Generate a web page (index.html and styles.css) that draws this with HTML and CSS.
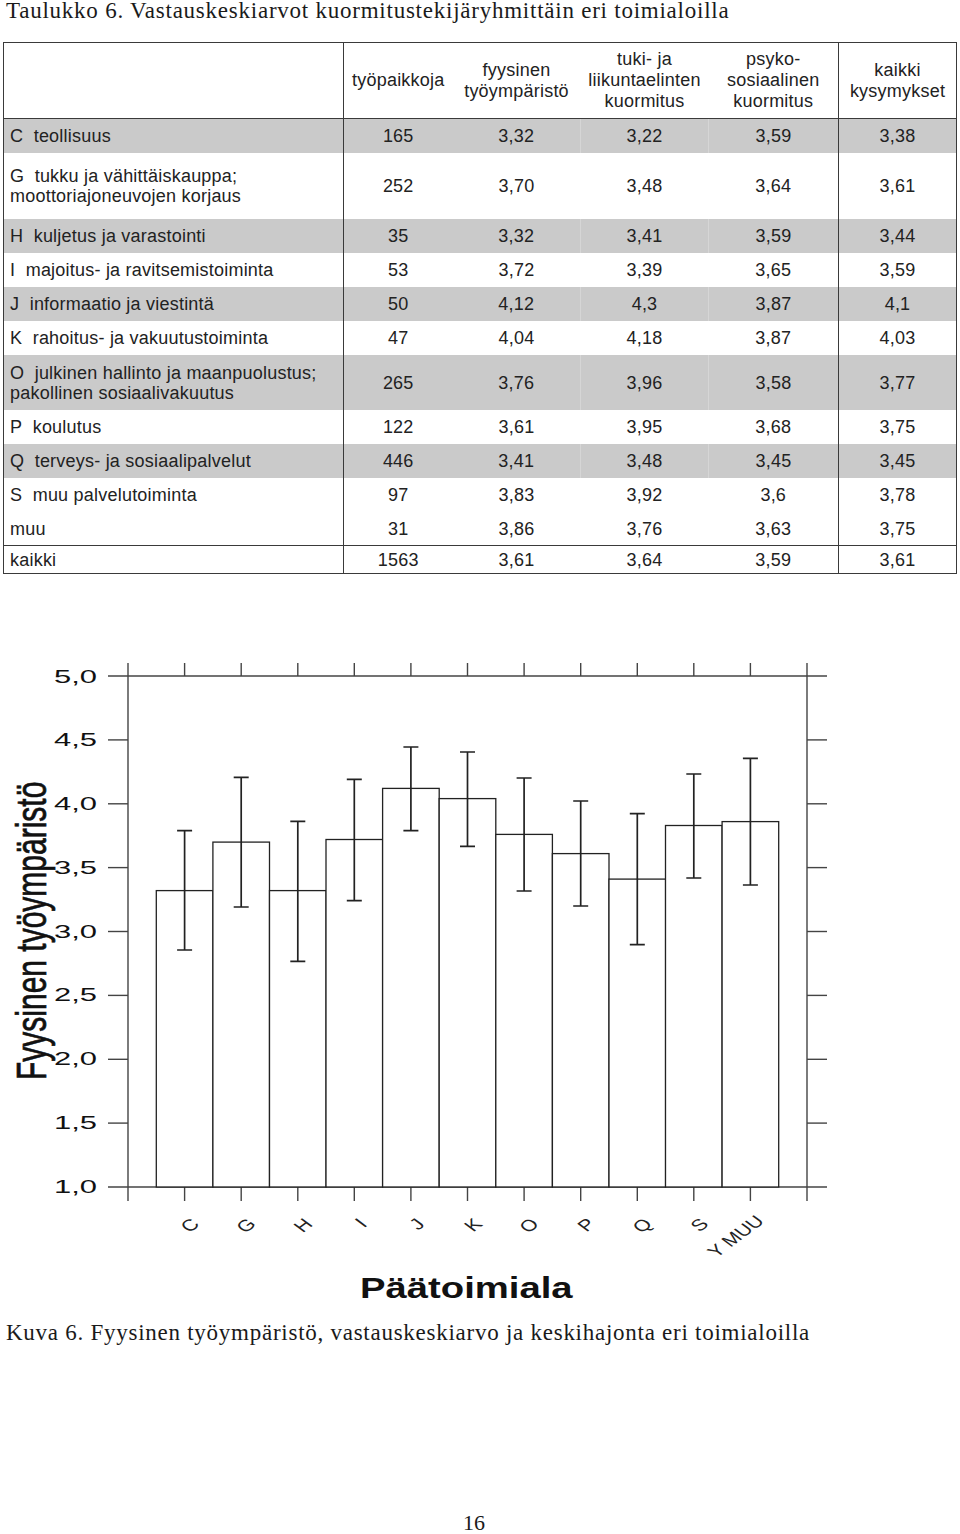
FILE: index.html
```html
<!DOCTYPE html>
<html lang="fi">
<head>
<meta charset="utf-8">
<title>Taulukko 6</title>
<link rel="stylesheet" href="styles.css">
</head>
<body>
<h1 class="title">Taulukko 6. Vastauskeskiarvot kuormitustekijäryhmittäin eri toimialoilla</h1>

<table class="data">
  <colgroup>
    <col class="c-label"><col class="c-n"><col class="c-v"><col class="c-v"><col class="c-v3"><col class="c-all">
  </colgroup>
  <thead>
    <tr class="head">
      <th></th>
      <th class="sep">työpaikkoja</th>
      <th>fyysinen<br>työympäristö</th>
      <th>tuki- ja<br>liikuntaelinten<br>kuormitus</th>
      <th>psyko-<br>sosiaalinen<br>kuormitus</th>
      <th class="sep">kaikki<br>kysymykset</th>
    </tr>
  </thead>
  <tbody>
    <tr class="gray"><td class="lbl">C&nbsp; teollisuus</td><td class="sep">165</td><td>3,32</td><td class="soft">3,22</td><td class="soft">3,59</td><td class="sep">3,38</td></tr>
    <tr class="tall"><td class="lbl">G&nbsp; tukku ja vähittäiskauppa;<br>moottoriajoneuvojen korjaus</td><td class="sep">252</td><td>3,70</td><td class="soft">3,48</td><td class="soft">3,64</td><td class="sep">3,61</td></tr>
    <tr class="gray"><td class="lbl">H&nbsp; kuljetus ja varastointi</td><td class="sep">35</td><td>3,32</td><td class="soft">3,41</td><td class="soft">3,59</td><td class="sep">3,44</td></tr>
    <tr><td class="lbl">I&nbsp; majoitus- ja ravitsemistoiminta</td><td class="sep">53</td><td>3,72</td><td class="soft">3,39</td><td class="soft">3,65</td><td class="sep">3,59</td></tr>
    <tr class="gray"><td class="lbl">J&nbsp; informaatio ja viestintä</td><td class="sep">50</td><td>4,12</td><td class="soft">4,3</td><td class="soft">3,87</td><td class="sep">4,1</td></tr>
    <tr><td class="lbl">K&nbsp; rahoitus- ja vakuutustoiminta</td><td class="sep">47</td><td>4,04</td><td class="soft">4,18</td><td class="soft">3,87</td><td class="sep">4,03</td></tr>
    <tr class="gray mid"><td class="lbl">O&nbsp; julkinen hallinto ja maanpuolustus;<br>pakollinen sosiaalivakuutus</td><td class="sep">265</td><td>3,76</td><td class="soft">3,96</td><td class="soft">3,58</td><td class="sep">3,77</td></tr>
    <tr><td class="lbl">P&nbsp; koulutus</td><td class="sep">122</td><td>3,61</td><td class="soft">3,95</td><td class="soft">3,68</td><td class="sep">3,75</td></tr>
    <tr class="gray"><td class="lbl">Q&nbsp; terveys- ja sosiaalipalvelut</td><td class="sep">446</td><td>3,41</td><td class="soft">3,48</td><td class="soft">3,45</td><td class="sep">3,45</td></tr>
    <tr><td class="lbl">S&nbsp; muu palvelutoiminta</td><td class="sep">97</td><td>3,83</td><td class="soft">3,92</td><td class="soft">3,6</td><td class="sep">3,78</td></tr>
    <tr class="short"><td class="lbl">muu</td><td class="sep">31</td><td>3,86</td><td class="soft">3,76</td><td class="soft">3,63</td><td class="sep">3,75</td></tr>
    <tr class="total"><td class="lbl">kaikki</td><td class="sep">1563</td><td>3,61</td><td>3,64</td><td>3,59</td><td class="sep">3,61</td></tr>
  </tbody>
</table>

<svg class="chart" viewBox="0 574 960 746" width="960" height="746" xmlns="http://www.w3.org/2000/svg">
  <g class="axis">
    <line x1="108" y1="676" x2="827" y2="676"/>
    <line x1="108" y1="1187" x2="827" y2="1187"/>
    <line x1="128" y1="663" x2="128" y2="1201"/>
    <line x1="807" y1="663" x2="807" y2="1201"/>
    <line x1="108" y1="1123.1" x2="128" y2="1123.1"/>
    <line x1="108" y1="1059.3" x2="128" y2="1059.3"/>
    <line x1="108" y1="995.4" x2="128" y2="995.4"/>
    <line x1="108" y1="931.5" x2="128" y2="931.5"/>
    <line x1="108" y1="867.6" x2="128" y2="867.6"/>
    <line x1="108" y1="803.8" x2="128" y2="803.8"/>
    <line x1="108" y1="739.9" x2="128" y2="739.9"/>
    <line x1="807" y1="1123.1" x2="827" y2="1123.1"/>
    <line x1="807" y1="1059.3" x2="827" y2="1059.3"/>
    <line x1="807" y1="995.4" x2="827" y2="995.4"/>
    <line x1="807" y1="931.5" x2="827" y2="931.5"/>
    <line x1="807" y1="867.6" x2="827" y2="867.6"/>
    <line x1="807" y1="803.8" x2="827" y2="803.8"/>
    <line x1="807" y1="739.9" x2="827" y2="739.9"/>
  </g>
  <g class="xticks">
    <line x1="184.6" y1="663" x2="184.6" y2="676"/><line x1="184.6" y1="1187" x2="184.6" y2="1201"/>
    <line x1="241.2" y1="663" x2="241.2" y2="676"/><line x1="241.2" y1="1187" x2="241.2" y2="1201"/>
    <line x1="297.8" y1="663" x2="297.8" y2="676"/><line x1="297.8" y1="1187" x2="297.8" y2="1201"/>
    <line x1="354.3" y1="663" x2="354.3" y2="676"/><line x1="354.3" y1="1187" x2="354.3" y2="1201"/>
    <line x1="410.9" y1="663" x2="410.9" y2="676"/><line x1="410.9" y1="1187" x2="410.9" y2="1201"/>
    <line x1="467.5" y1="663" x2="467.5" y2="676"/><line x1="467.5" y1="1187" x2="467.5" y2="1201"/>
    <line x1="524.1" y1="663" x2="524.1" y2="676"/><line x1="524.1" y1="1187" x2="524.1" y2="1201"/>
    <line x1="580.7" y1="663" x2="580.7" y2="676"/><line x1="580.7" y1="1187" x2="580.7" y2="1201"/>
    <line x1="637.3" y1="663" x2="637.3" y2="676"/><line x1="637.3" y1="1187" x2="637.3" y2="1201"/>
    <line x1="693.8" y1="663" x2="693.8" y2="676"/><line x1="693.8" y1="1187" x2="693.8" y2="1201"/>
    <line x1="750.4" y1="663" x2="750.4" y2="676"/><line x1="750.4" y1="1187" x2="750.4" y2="1201"/>
  </g>
  <g class="ylabels">
    <text x="97" y="683" textLength="43" lengthAdjust="spacingAndGlyphs">5,0</text>
    <text x="97" y="746" textLength="43" lengthAdjust="spacingAndGlyphs">4,5</text>
    <text x="97" y="810" textLength="43" lengthAdjust="spacingAndGlyphs">4,0</text>
    <text x="97" y="874" textLength="43" lengthAdjust="spacingAndGlyphs">3,5</text>
    <text x="97" y="938" textLength="43" lengthAdjust="spacingAndGlyphs">3,0</text>
    <text x="97" y="1001" textLength="43" lengthAdjust="spacingAndGlyphs">2,5</text>
    <text x="97" y="1065" textLength="43" lengthAdjust="spacingAndGlyphs">2,0</text>
    <text x="97" y="1129" textLength="43" lengthAdjust="spacingAndGlyphs">1,5</text>
    <text x="97" y="1193" textLength="43" lengthAdjust="spacingAndGlyphs">1,0</text>
  </g>
  <g class="bars">
    <rect x="156.3" y="890.6" width="56.6" height="296.4"/>
    <rect x="212.9" y="842.1" width="56.6" height="344.9"/>
    <rect x="269.5" y="890.6" width="56.6" height="296.4"/>
    <rect x="326.0" y="839.5" width="56.6" height="347.5"/>
    <rect x="382.6" y="788.4" width="56.6" height="398.6"/>
    <rect x="439.2" y="798.6" width="56.6" height="388.4"/>
    <rect x="495.8" y="834.4" width="56.6" height="352.6"/>
    <rect x="552.4" y="853.6" width="56.6" height="333.4"/>
    <rect x="609.0" y="879.1" width="56.6" height="307.9"/>
    <rect x="665.5" y="825.5" width="56.6" height="361.5"/>
    <rect x="722.1" y="821.6" width="56.6" height="365.4"/>
  </g>
  <g class="err">
    <path d="M184.6 830.7V950M177.1 830.7H192.1M177.1 950H192.1"/>
    <path d="M241.2 777.3V907M233.7 777.3H248.7M233.7 907H248.7"/>
    <path d="M297.8 821.3V961.3M290.3 821.3H305.3M290.3 961.3H305.3"/>
    <path d="M354.3 779.3V900.7M346.8 779.3H361.8M346.8 900.7H361.8"/>
    <path d="M410.9 747V830.7M403.4 747H418.4M403.4 830.7H418.4"/>
    <path d="M467.5 752V846.3M460 752H475M460 846.3H475"/>
    <path d="M524.1 778V891M516.6 778H531.6M516.6 891H531.6"/>
    <path d="M580.7 801V906M573.2 801H588.2M573.2 906H588.2"/>
    <path d="M637.3 813.7V944.7M629.8 813.7H644.8M629.8 944.7H644.8"/>
    <path d="M693.8 774V878M686.3 774H701.3M686.3 878H701.3"/>
    <path d="M750.4 758.3V885M742.9 758.3H757.9M742.9 885H757.9"/>
  </g>
  <g class="xlabels">
    <text transform="translate(200.6 1225) scale(1.35 1) rotate(-45)">C</text>
    <text transform="translate(257.2 1225) scale(1.35 1) rotate(-45)">G</text>
    <text transform="translate(313.8 1225) scale(1.35 1) rotate(-45)">H</text>
    <text transform="translate(368.3 1225) scale(1.35 1) rotate(-45)">I</text>
    <text transform="translate(425.9 1225) scale(1.35 1) rotate(-45)">J</text>
    <text transform="translate(483.5 1225) scale(1.35 1) rotate(-45)">K</text>
    <text transform="translate(540.1 1225) scale(1.35 1) rotate(-45)">O</text>
    <text transform="translate(596.7 1225) scale(1.35 1) rotate(-45)">P</text>
    <text transform="translate(653.3 1225) scale(1.35 1) rotate(-45)">Q</text>
    <text transform="translate(709.8 1225) scale(1.35 1) rotate(-45)">S</text>
    <text transform="translate(765.4 1222) scale(1.35 1) rotate(-45)">Y MUU</text>
  </g>
  <text class="ytitle" transform="translate(46 1080) scale(1.4 1) rotate(-90)">Fyysinen työympäristö</text>
  <text class="xtitle" transform="translate(360 1298) scale(1.32 1)">Päätoimiala</text>
</svg>

<p class="caption">Kuva 6. Fyysinen työympäristö, vastauskeskiarvo ja keskihajonta eri toimialoilla</p>
<p class="pageno">16</p>
</body>
</html>
```

FILE: styles.css
```css
html, body {
  margin: 0;
  padding: 0;
  background: #ffffff;
}

body {
  width: 960px;
  color: #1a1a1a;
  font-family: "Liberation Serif", "Times New Roman", serif;
}

.title {
  margin: 0;
  padding: 1px 0 0 6px;
  font-family: "Liberation Serif", "Times New Roman", serif;
  font-weight: normal;
  font-size: 23px;
  letter-spacing: 0.76px;
  line-height: 20px;
  height: 20px;
  white-space: nowrap;
}

.data {
  margin: 21px 0 0 3px;
  width: 953px;
  border-collapse: collapse;
  table-layout: fixed;
  border: 1.5px solid #3a3a3a;
  font-family: "Liberation Sans", Arial, sans-serif;
  font-size: 18px;
  letter-spacing: 0.22px;
  color: #222;
}

.c-label { width: 340px; }
.c-n { width: 109px; }
.c-v { width: 128px; }
.c-v3 { width: 130px; }
.c-all { width: 118px; }

.data th {
  font-weight: normal;
  line-height: 21px;
  height: 75px;
  padding: 0;
  text-align: center;
  vertical-align: middle;
  border-bottom: 1px solid #3a3a3a;
}

.data td {
  height: 34px;
  padding: 0;
  line-height: 20px;
  text-align: center;
  vertical-align: middle;
  white-space: nowrap;
}

.data td.lbl {
  text-align: left;
  padding-left: 6px;
}

.data .sep {
  border-left: 1px solid #3a3a3a;
}

.data tr.gray td {
  background: #cacaca;
}

.data tr.gray td.soft {
  border-left: 1px solid #d6d6d6;
}

.data tr.tall td { height: 66px; }
.data tr.mid td { height: 55px; }
.data tr.short td { height: 33px; }
.data tr.total td {
  height: 27px;
  border-top: 1px solid #3a3a3a;
}

.chart {
  display: block;
}

.axis line,
.xticks line {
  stroke: #444;
  stroke-width: 1.4;
}

.bars rect {
  fill: #ffffff;
  stroke: #222;
  stroke-width: 1.3;
}

.err path {
  fill: none;
  stroke: #222;
  stroke-width: 1.7;
}

.ylabels text {
  font-family: "Liberation Sans", Arial, sans-serif;
  font-size: 18px;
  fill: #111;
  text-anchor: end;
}

.xlabels text {
  font-family: "Liberation Sans", Arial, sans-serif;
  font-size: 16px;
  fill: #222;
  text-anchor: end;
}

.ytitle {
  font-family: "Liberation Sans", Arial, sans-serif;
  font-size: 30px;
  fill: #111;
  stroke: #111;
  stroke-width: 0.5;
}

.xtitle {
  font-family: "Liberation Sans", Arial, sans-serif;
  font-size: 29px;
  font-weight: bold;
  fill: #111;
}

.caption {
  margin: 0;
  padding-left: 6px;
  font-size: 23px;
  letter-spacing: 0.74px;
  line-height: 26px;
  white-space: nowrap;
}

.pageno {
  margin: 164px 0 0 0;
  text-align: center;
  padding-right: 12px;
  font-size: 22px;
  line-height: 26px;
}
```
